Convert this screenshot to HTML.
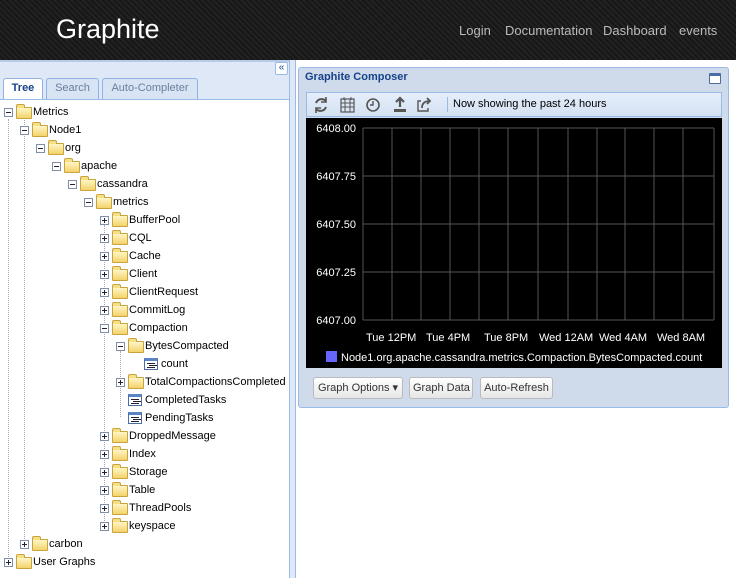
<!DOCTYPE html>
<html><head><style>
*{margin:0;padding:0;box-sizing:border-box}
body{width:736px;height:578px;overflow:hidden;font-family:"Liberation Sans",Arial,sans-serif;background:#fff;position:relative}
#hdr{position:absolute;left:0;top:0;width:736px;height:60px;background:#1c1c1c;background-image:repeating-linear-gradient(45deg,#222 0 2px,#171717 2px 4px)}
#hdr .logo{position:absolute;left:56px;top:14px;color:#fff;font-size:27px}
#hdr .nav{position:absolute;top:23px;color:#bbb;font-size:13px}
#left{position:absolute;left:0;top:60px;width:290px;height:518px;background:#fff;border-right:1px solid #99bbe8}
#lhead{position:absolute;left:0;top:0;width:289px;height:40px;background:#dfe8f6;border-top:2px solid #b7cbe6}
.tab{position:absolute;top:16px;height:21px;border:1px solid #8db2e3;border-bottom:none;background:#d8e4f3;font-size:11px;color:#6a7f9f;text-align:center;line-height:19px;border-radius:3px 3px 0 0}
.tab.on{background:#fff;color:#15428b;font-weight:bold;height:22px}
#split{position:absolute;left:290px;top:60px;width:6px;height:518px;background:#dfe8f6;border-right:1px solid #99bbe8}
.r{position:absolute;height:18px;font-size:11px;color:#000;line-height:18px;white-space:nowrap}
.tg{position:absolute;width:9px;height:9px;border:1px solid #7f8fa6;background:#fff;top:5px}
.tg:before{content:"";position:absolute;left:1px;top:3px;width:5px;height:1px;background:#223}
.tg.p:after{content:"";position:absolute;left:3px;top:1px;width:1px;height:5px;background:#223}
.fd{position:absolute;top:4px;width:16px;height:12px;background:linear-gradient(#fff6c8,#f3d36b);border:1px solid #c9a43a;border-radius:1px}
.fd:before{content:"";position:absolute;left:-1px;top:-4px;width:7px;height:3px;background:#f6df8a;border:1px solid #c9a43a;border-bottom:none;border-radius:2px 2px 0 0}
.lf{position:absolute;top:3px;width:14px;height:12px;border:1px solid #4a6da4;background:#fff;border-top:3px solid #5b84c4}
.lf:before{content:"";position:absolute;left:2px;top:2px;width:8px;height:1px;background:#223;box-shadow:2px 2px 0 #223,0 4px 0 #223}
.tx{position:absolute;top:0}
.vl{position:absolute;border-left:1px dotted #aaa;width:0}
#comp{position:absolute;left:298px;top:67px;width:431px;height:341px;background:#cfdaea;border:1px solid #99bbe8;border-radius:3px}
#comp .t{position:absolute;left:6px;top:3px;font-size:11px;font-weight:bold;color:#15428b}
#tb{position:absolute;left:7px;top:24px;width:416px;height:25px;background:linear-gradient(#e5eefb,#d4e1f2);border:1px solid #99bbe8}
.btn{position:absolute;top:309px;height:22px;border:1px solid #bbb;border-radius:3px;background:linear-gradient(#fff,#e6e6e6);font-size:11px;color:#333;line-height:20px;padding:0 3px;white-space:nowrap;text-align:center}
</style></head><body>
<div id="hdr"><div class="logo">Graphite</div>
<div class="nav" style="left:459px">Login</div><div class="nav" style="left:505px">Documentation</div><div class="nav" style="left:603px">Dashboard</div><div class="nav" style="left:679px">events</div></div>
<div id="left">
<div id="lhead">
<div style="position:absolute;left:275px;top:0;width:13px;height:13px;border:1px solid #99bbe8;background:#fff;border-radius:2px;font-size:10px;line-height:10px;color:#15428b;text-align:center">«</div>
<div class="tab on" style="left:3px;width:40px">Tree</div>
<div class="tab" style="left:46px;width:53px">Search</div>
<div class="tab" style="left:102px;width:96px">Auto-Completer</div>
<div style="position:absolute;left:0;top:37px;width:289px;height:1px;background:#99bbe8"></div>
</div>
<div class="vl" style="left:24px;top:57px;height:430px"></div>
<div class="vl" style="left:8px;top:59px;height:444px"></div>
<div class="vl" style="left:104px;top:165px;height:306px"></div>
<div class="vl" style="left:120px;top:291px;height:66px"></div>
</div>
<div id="tree" style="position:absolute;left:0;top:1px">
<div class="r" style="top:102px;left:0"><span class="tg" style="left:4px"></span><span class="fd" style="left:16px"></span><span class="tx" style="left:33px">Metrics</span></div>
<div class="r" style="top:120px;left:16px"><span class="tg" style="left:4px"></span><span class="fd" style="left:16px"></span><span class="tx" style="left:33px">Node1</span></div>
<div class="r" style="top:138px;left:32px"><span class="tg" style="left:4px"></span><span class="fd" style="left:16px"></span><span class="tx" style="left:33px">org</span></div>
<div class="r" style="top:156px;left:48px"><span class="tg" style="left:4px"></span><span class="fd" style="left:16px"></span><span class="tx" style="left:33px">apache</span></div>
<div class="r" style="top:174px;left:64px"><span class="tg" style="left:4px"></span><span class="fd" style="left:16px"></span><span class="tx" style="left:33px">cassandra</span></div>
<div class="r" style="top:192px;left:80px"><span class="tg" style="left:4px"></span><span class="fd" style="left:16px"></span><span class="tx" style="left:33px">metrics</span></div>
<div class="r" style="top:210px;left:96px"><span class="tg p" style="left:4px"></span><span class="fd" style="left:16px"></span><span class="tx" style="left:33px">BufferPool</span></div>
<div class="r" style="top:228px;left:96px"><span class="tg p" style="left:4px"></span><span class="fd" style="left:16px"></span><span class="tx" style="left:33px">CQL</span></div>
<div class="r" style="top:246px;left:96px"><span class="tg p" style="left:4px"></span><span class="fd" style="left:16px"></span><span class="tx" style="left:33px">Cache</span></div>
<div class="r" style="top:264px;left:96px"><span class="tg p" style="left:4px"></span><span class="fd" style="left:16px"></span><span class="tx" style="left:33px">Client</span></div>
<div class="r" style="top:282px;left:96px"><span class="tg p" style="left:4px"></span><span class="fd" style="left:16px"></span><span class="tx" style="left:33px">ClientRequest</span></div>
<div class="r" style="top:300px;left:96px"><span class="tg p" style="left:4px"></span><span class="fd" style="left:16px"></span><span class="tx" style="left:33px">CommitLog</span></div>
<div class="r" style="top:318px;left:96px"><span class="tg" style="left:4px"></span><span class="fd" style="left:16px"></span><span class="tx" style="left:33px">Compaction</span></div>
<div class="r" style="top:336px;left:112px"><span class="tg" style="left:4px"></span><span class="fd" style="left:16px"></span><span class="tx" style="left:33px">BytesCompacted</span></div>
<div class="r" style="top:354px;left:128px"><span class="lf" style="left:16px"></span><span class="tx" style="left:33px">count</span></div>
<div class="r" style="top:372px;left:112px"><span class="tg p" style="left:4px"></span><span class="fd" style="left:16px"></span><span class="tx" style="left:33px">TotalCompactionsCompleted</span></div>
<div class="r" style="top:390px;left:112px"><span class="lf" style="left:16px"></span><span class="tx" style="left:33px">CompletedTasks</span></div>
<div class="r" style="top:408px;left:112px"><span class="lf" style="left:16px"></span><span class="tx" style="left:33px">PendingTasks</span></div>
<div class="r" style="top:426px;left:96px"><span class="tg p" style="left:4px"></span><span class="fd" style="left:16px"></span><span class="tx" style="left:33px">DroppedMessage</span></div>
<div class="r" style="top:444px;left:96px"><span class="tg p" style="left:4px"></span><span class="fd" style="left:16px"></span><span class="tx" style="left:33px">Index</span></div>
<div class="r" style="top:462px;left:96px"><span class="tg p" style="left:4px"></span><span class="fd" style="left:16px"></span><span class="tx" style="left:33px">Storage</span></div>
<div class="r" style="top:480px;left:96px"><span class="tg p" style="left:4px"></span><span class="fd" style="left:16px"></span><span class="tx" style="left:33px">Table</span></div>
<div class="r" style="top:498px;left:96px"><span class="tg p" style="left:4px"></span><span class="fd" style="left:16px"></span><span class="tx" style="left:33px">ThreadPools</span></div>
<div class="r" style="top:516px;left:96px"><span class="tg p" style="left:4px"></span><span class="fd" style="left:16px"></span><span class="tx" style="left:33px">keyspace</span></div>
<div class="r" style="top:534px;left:16px"><span class="tg p" style="left:4px"></span><span class="fd" style="left:16px"></span><span class="tx" style="left:33px">carbon</span></div>
<div class="r" style="top:552px;left:0"><span class="tg p" style="left:4px"></span><span class="fd" style="left:16px"></span><span class="tx" style="left:33px">User Graphs</span></div>
</div>
<div id="split"></div>
<div id="comp">
<div class="t">Graphite Composer</div>
<div style="position:absolute;right:7px;top:5px;width:12px;height:11px;border:1px solid #4a6da4;border-top:3px solid #4a6da4;background:#fff;border-radius:1px"></div>
<div id="tb">
<svg width="150" height="22" style="position:absolute;left:4px;top:1px" fill="none" stroke="#555" stroke-width="2">
<path d="M5 9a6 6 0 0 1 10-2M15 13a6 6 0 0 1-10 2"/><path d="M15 3v5h-5M5 19v-5h5" stroke-width="1.6"/>
<rect x="30" y="5" width="13" height="13" stroke-width="1.2"/><path d="M30 9h13M30 13h13M34 5v13M39 5v13M33 3v3M40 3v3" stroke-width="1"/>
<circle cx="62" cy="11" r="6" stroke-width="1.6"/><path d="M62 7v4h-3" stroke-width="1.4"/>
<path d="M89 4v9M85 8l4-4 4 4" stroke-width="2.2"/><path d="M83 15h12v3H83z" fill="#555" stroke="none"/>
<path d="M110 7h-3v10h10v-3" stroke-width="1.4"/><path d="M111 14c0-5 3-7 8-7M116 4l3 3-3 3" stroke-width="1.8"/>
</svg>
<div style="position:absolute;left:140px;top:4px;width:1px;height:15px;background:#99bbe8"></div>
<div style="position:absolute;left:146px;top:5px;font-size:11px;color:#000">Now showing the past 24 hours</div>
</div>
<svg style="position:absolute;left:7px;top:50px" width="416" height="250">
<rect width="416" height="250" fill="#000"/>
<g stroke="#555" stroke-width="1">
<path d="M57 10h351M57 58h351M57 106h351M57 154h351M57 202h351"/>
<path d="M57 10v192M86 10v192M115 10v192M144 10v192M173 10v192M202 10v192M232 10v192M262 10v192M291 10v192M319 10v192M348 10v192M377 10v192M408 10v192"/>
</g>
<g fill="#fff" font-size="11" font-family="Liberation Sans,sans-serif">
<g text-anchor="end"><text x="50" y="14">6408.00</text><text x="50" y="62">6407.75</text><text x="50" y="110">6407.50</text><text x="50" y="158">6407.25</text><text x="50" y="206">6407.00</text></g>
<text x="60" y="223">Tue 12PM</text><text x="120" y="223">Tue  4PM</text><text x="178" y="223">Tue  8PM</text><text x="233" y="223">Wed 12AM</text><text x="293" y="223">Wed  4AM</text><text x="351" y="223">Wed  8AM</text>
<rect x="20" y="233" width="11" height="11" fill="#6666ff"/>
<text x="35" y="243">Node1.org.apache.cassandra.metrics.Compaction.BytesCompacted.count</text>
</g>
</svg>
<div class="btn" style="left:14px;width:90px">Graph Options ▾</div>
<div class="btn" style="left:110px;width:64px">Graph Data</div>
<div class="btn" style="left:181px;width:73px">Auto-Refresh</div>
</div>
</body></html>
